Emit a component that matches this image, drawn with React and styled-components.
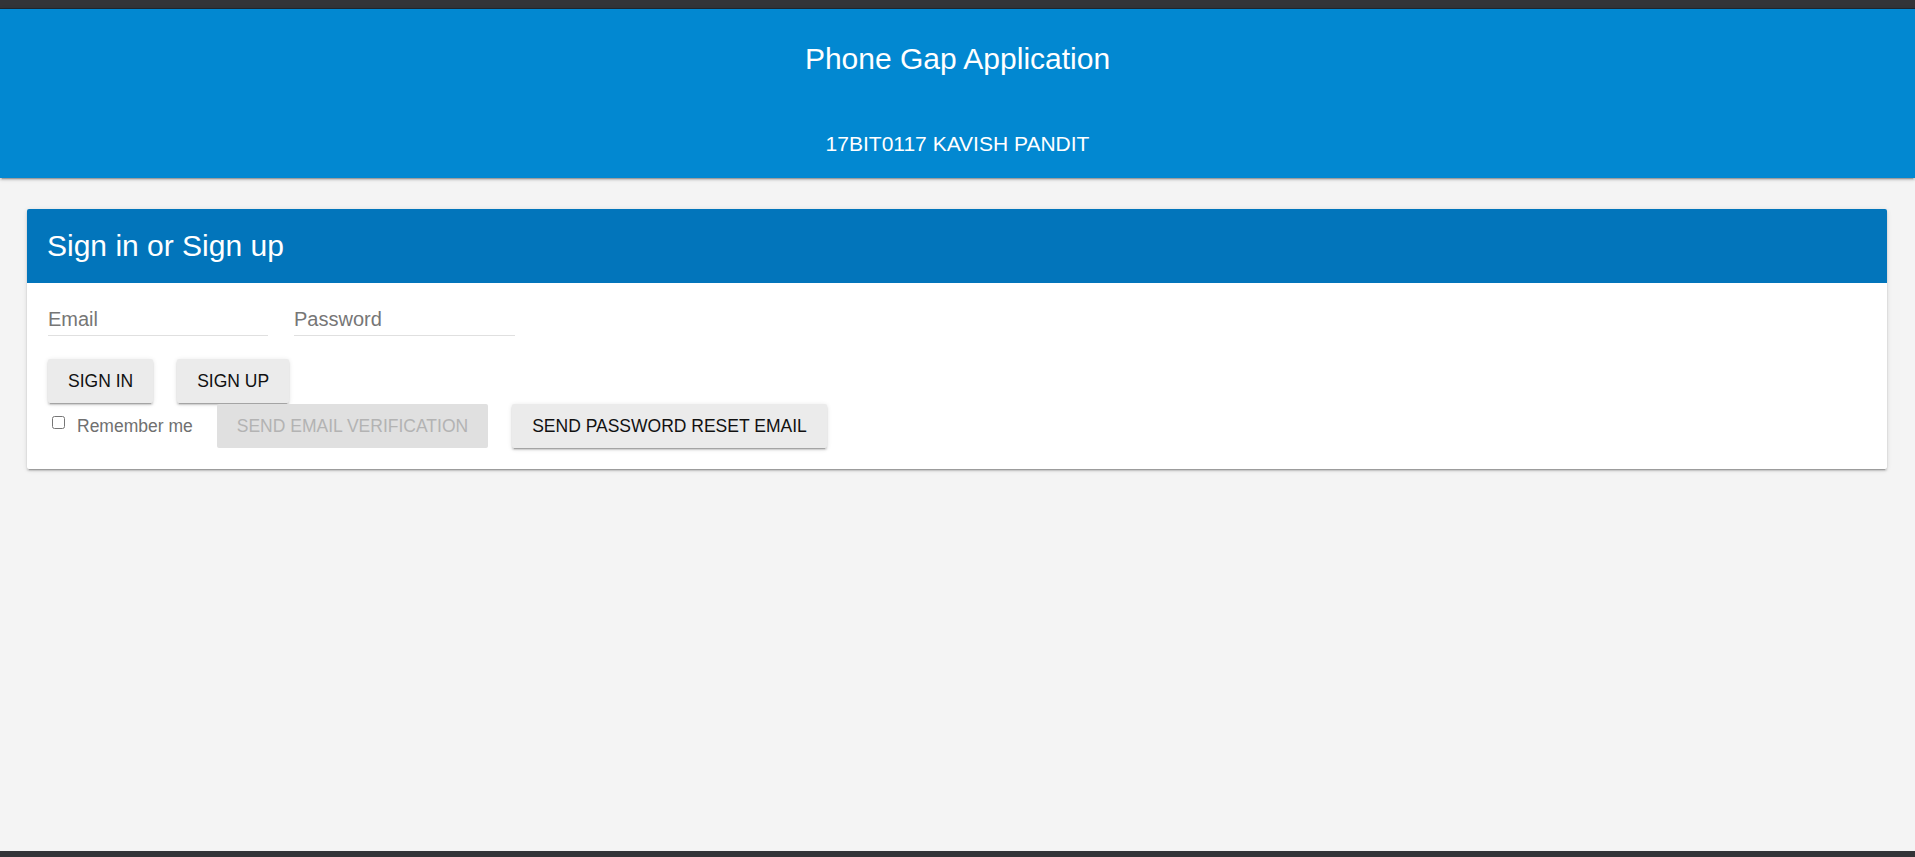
import React from "react";
import styled, { createGlobalStyle } from "styled-components";

const GlobalStyle = createGlobalStyle`
  html, body {
    margin: 0;
    padding: 0;
    background: #f4f4f4;
    font-family: "Liberation Sans", Arial, sans-serif;
  }
  * { box-sizing: border-box; }
`;

const Page = styled.div`
  min-height: 100vh;
  display: flex;
  flex-direction: column;
  background: #f4f4f4;
`;

const TopStrip = styled.div`
  height: 9px;
  background: #333438;
  border-bottom: 1px solid #1d2832;
  flex-shrink: 0;
`;

const BottomStrip = styled.div`
  height: 6px;
  background: #333438;
  flex-shrink: 0;
`;

const Header = styled.header`
  height: 169px;
  background: #0288d1;
  color: #fff;
  display: flex;
  flex-direction: column;
  align-items: center;
  padding-top: 35px;
  box-shadow: 0 2px 2px 0 rgba(0, 0, 0, 0.14), 0 3px 1px -2px rgba(0, 0, 0, 0.2),
    0 1px 5px 0 rgba(0, 0, 0, 0.12);
  position: relative;
  z-index: 1;
  flex-shrink: 0;
`;

const AppTitle = styled.div`
  font-size: 30px;
  line-height: 30px;
  font-weight: 400;
`;

const Subtitle = styled.div`
  margin-top: 59px;
  font-size: 21px;
  line-height: 21px;
  text-transform: uppercase;
`;

const Main = styled.main`
  flex: 1;
  padding: 31px 28px 0 27px;
`;

const Card = styled.section`
  background: #fff;
  border-radius: 2px;
  box-shadow: 0 2px 2px 0 rgba(0, 0, 0, 0.14), 0 3px 1px -2px rgba(0, 0, 0, 0.2),
    0 1px 5px 0 rgba(0, 0, 0, 0.12);
  overflow: hidden;
`;

const CardHeader = styled.div`
  height: 74px;
  background: #0275bb;
  color: #fff;
  display: flex;
  align-items: center;
  padding-left: 20px;
`;

const CardTitle = styled.h2`
  margin: 0;
  font-size: 30px;
  line-height: 30px;
  font-weight: 400;
`;

const CardBody = styled.div`
  padding: 20px 21px 21px;
`;

const FieldRow = styled.div`
  display: flex;
  gap: 26px;
`;

const TextInput = styled.input`
  width: ${(p) => p.$w}px;
  border: none;
  border-bottom: 1px solid #e0e0e0;
  padding: 4px 0;
  line-height: 24px;
  height: 33px;
  font-family: "Liberation Sans", Arial, sans-serif;
  font-size: 20px;
  color: #212121;
  background: transparent;
  outline: none;
  &::placeholder {
    color: #767676;
  }
`;

const ButtonRow = styled.div`
  display: flex;
  align-items: center;
  gap: 24px;
  margin-top: ${(p) => p.$top}px;
`;

const Button = styled.button`
  height: 44px;
  padding: 0 20px;
  border: none;
  border-radius: 2px;
  font-family: "Liberation Sans", Arial, sans-serif;
  font-size: 17.5px;
  text-transform: uppercase;
  color: ${(p) => (p.disabled ? "#b3b3b3" : "#111")};
  background: ${(p) => (p.disabled ? "#e0e0e0" : "#ebebeb")};
  box-shadow: ${(p) =>
    p.disabled
      ? "none"
      : "0 2px 2px 0 rgba(0,0,0,.14), 0 3px 1px -2px rgba(0,0,0,.2), 0 1px 5px 0 rgba(0,0,0,.12)"};
  cursor: ${(p) => (p.disabled ? "default" : "pointer")};
  white-space: nowrap;
`;

const CheckLabel = styled.label`
  display: flex;
  align-items: center;
  font-size: 17.5px;
  color: #707070;
  white-space: nowrap;
`;

const CheckBox = styled.input`
  width: 13px;
  height: 13px;
  margin: 0 12px 7px 4px;
`;

export default function App() {
  return (
    <>
      <GlobalStyle />
      <Page>
        <TopStrip />
        <Header>
          <AppTitle>Phone Gap Application</AppTitle>
          <Subtitle>17BIT0117 Kavish Pandit</Subtitle>
        </Header>
        <Main>
          <Card>
            <CardHeader>
              <CardTitle>Sign in or Sign up</CardTitle>
            </CardHeader>
            <CardBody>
              <FieldRow>
                <TextInput type="text" placeholder="Email" $w={220} />
                <TextInput type="password" placeholder="Password" $w={221} />
              </FieldRow>
              <ButtonRow $top={23}>
                <Button>Sign In</Button>
                <Button>Sign Up</Button>
              </ButtonRow>
              <ButtonRow $top={1}>
                <CheckLabel>
                  <CheckBox type="checkbox" />
                  Remember me
                </CheckLabel>
                <Button disabled>Send Email Verification</Button>
                <Button>Send Password Reset Email</Button>
              </ButtonRow>
            </CardBody>
          </Card>
        </Main>
        <BottomStrip />
      </Page>
    </>
  );
}
